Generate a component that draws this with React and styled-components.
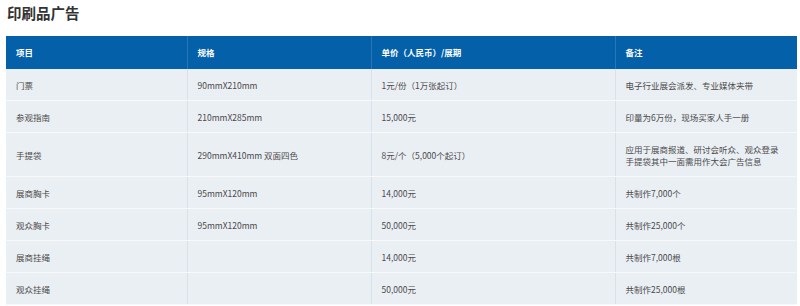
import React from "react";
import styled, { createGlobalStyle } from "styled-components";

const GlobalStyle = createGlobalStyle`
  body {
    margin: 0;
    background: #fff;
    font-family: "Noto Sans CJK SC", "Noto Sans", sans-serif;
  }
`;

const Page = styled.div`
  padding: 0 0 0 6px;
`;

const Title = styled.h2`
  margin: 0;
  padding: 3px 0 0 1px;
  height: 36px;
  box-sizing: border-box;
  font-size: 14.5px;
  line-height: 20px;
  font-weight: 700;
  color: #333;
`;

const Table = styled.table`
  width: 791px;
  border-collapse: collapse;
  table-layout: fixed;
  font-size: 8.5px;
  line-height: 12px;
`;

const HeadCell = styled.th`
  background: #0560aa;
  color: #fff;
  font-weight: 700;
  text-align: left;
  padding: 10px 10px 11px;
  border-right: 1px solid #2b76b6;
  &:last-child {
    border-right: none;
  }
`;

const Cell = styled.td`
  background: #eaeff4;
  color: #4a4a4a;
  padding: 10px 10px 9px 10px;
  vertical-align: middle;
  border-bottom: 1px solid #f6f8fa;
  border-right: 1px solid #d8e2ec;
  &:last-child {
    border-right: none;
  }
`;

const columns = [
  { label: "项目", width: 181 },
  { label: "规格", width: 184 },
  { label: "单价（人民币）/展期", width: 244 },
  { label: "备注", width: 182 },
];

const rows = [
  ["门票", "90mmX210mm", "1元/份（1万张起订）", "电子行业展会派发、专业媒体夹带"],
  ["参观指南", "210mmX285mm", "15,000元", "印量为6万份，现场买家人手一册"],
  [
    "手提袋",
    "290mmX410mm 双面四色",
    "8元/个（5,000个起订）",
    "应用于展商报道、研讨会听众、观众登录\n手提袋其中一面需用作大会广告信息",
  ],
  ["展商胸卡", "95mmX120mm", "14,000元", "共制作7,000个"],
  ["观众胸卡", "95mmX120mm", "50,000元", "共制作25,000个"],
  ["展商挂绳", "", "14,000元", "共制作7,000根"],
  ["观众挂绳", "", "50,000元", "共制作25,000根"],
];

export default function App() {
  return (
    <Page>
      <GlobalStyle />
      <Title>印刷品广告</Title>
      <Table>
        <colgroup>
          {columns.map((c) => (
            <col key={c.label} style={{ width: c.width }} />
          ))}
        </colgroup>
        <thead>
          <tr>
            {columns.map((c) => (
              <HeadCell key={c.label}>{c.label}</HeadCell>
            ))}
          </tr>
        </thead>
        <tbody>
          {rows.map((r) => (
            <tr key={r[0]}>
              {r.map((v, i) => (
                <Cell key={i}>
                  {v.split("\n").map((line, j) => (
                    <div key={j}>{line}</div>
                  ))}
                </Cell>
              ))}
            </tr>
          ))}
        </tbody>
      </Table>
    </Page>
  );
}
